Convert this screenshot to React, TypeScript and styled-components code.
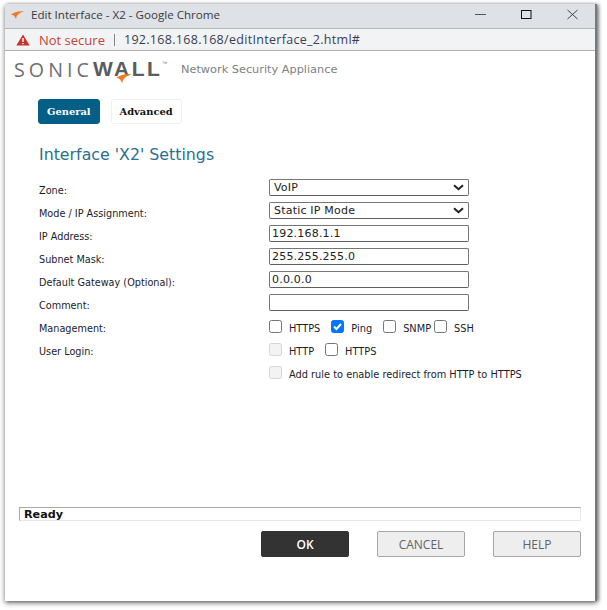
import { createGlobalStyle } from "styled-components";
import styled from "styled-components";

const GlobalStyle = createGlobalStyle`
  html, body {
    margin: 0;
    padding: 0;
    background: #ffffff;
  }
  body {
    font-family: "DejaVu Sans", Verdana, sans-serif;
  }
`;

const Page = styled.div`
  width: 607px;
  height: 610px;
  box-sizing: border-box;
  padding: 4px 10px 9px 5px;
  background: #ffffff;
`;

const Window = styled.div`
  height: 100%;
  box-sizing: border-box;
  display: flex;
  flex-direction: column;
  background: #ffffff;
  border-right: 2px solid #777a7d;
  box-shadow: 0 2px 5px rgba(0, 0, 0, 0.55), 2px 0 3px rgba(0, 0, 0, 0.3);
`;

const TitleBar = styled.div`
  height: 25px;
  flex: none;
  box-sizing: border-box;
  display: flex;
  align-items: center;
  padding: 0 0 3px 5px;
  background: #dee1e6;
  border-bottom: 1px solid #b4b6b9;
`;

const WindowTitle = styled.span`
  margin-left: 6px;
  font-family: "Open Sans", "Liberation Sans", sans-serif;
  font-size: 11.6px;
  color: #3a3b3d;
  flex: 1;
`;

const WindowButton = styled.div`
  width: 46px;
  height: 21px;
  display: flex;
  align-items: center;
  justify-content: center;
`;

const AddressBar = styled.div`
  height: 22px;
  flex: none;
  box-sizing: border-box;
  display: flex;
  align-items: center;
  padding-left: 11px;
  background: #f1f3f4;
  border-bottom: 1px solid #aeb0b2;
`;

const NotSecure = styled.span`
  margin-left: 9px;
  font-family: "Open Sans", "Liberation Sans", sans-serif;
  font-size: 13px;
  color: #c5443a;
`;

const Divider = styled.span`
  width: 1px;
  height: 12px;
  margin: 0 9px;
  background: #80868b;
`;

const Url = styled.span`
  font-family: "Open Sans", "Liberation Sans", sans-serif;
  font-size: 12.5px;
  letter-spacing: 0.3px;
  color: #3a3d55;
`;

const Brand = styled.div`
  height: 33px;
  flex: none;
  display: flex;
  align-items: center;
  padding: 3px 0 0 9px;
  box-sizing: border-box;
`;

const LogoWrap = styled.div`
  position: relative;
  width: 154px;
  display: flex;
  align-items: center;
  height: 22px;
`;

const LogoLight = styled.span`
  font-family: "Open Sans", "Liberation Sans", sans-serif;
  font-size: 19.6px;
  font-weight: 400;
  letter-spacing: 4.1px;
  color: #6c6f72;
`;

const LogoBold = styled.span`
  font-family: "Liberation Sans", sans-serif;
  font-size: 21px;
  font-weight: 700;
  letter-spacing: 2.4px;
  color: #5a5c5f;
`;

const LogoMark = styled.span`
  font-family: "Liberation Sans", sans-serif;
  font-size: 5px;
  color: #6c6f72;
  align-self: flex-start;
  margin-top: 2px;
`;

const LogoSwoosh = styled.svg`
  position: absolute;
  left: 100px;
  top: 15px;
`;

const Product = styled.span`
  margin-left: 13px;
  padding-top: 1px;
  font-family: "DejaVu Sans", sans-serif;
  font-size: 11.3px;
  color: #7c7f83;
`;

const Tabs = styled.div`
  display: flex;
  gap: 11px;
  padding: 15px 0 0 33px;
`;

const Tab = styled.div<{ $active?: boolean }>`
  height: 25px;
  box-sizing: border-box;
  padding: 0 8px;
  display: flex;
  align-items: center;
  font-family: "DejaVu Serif", "Liberation Serif", serif;
  font-size: 9.9px;
  font-weight: 700;
  border-radius: 3px;
  color: ${(p) => (p.$active ? "#ffffff" : "#111111")};
  background: ${(p) => (p.$active ? "#045f86" : "#ffffff")};
  border: 1px solid ${(p) => (p.$active ? "#045f86" : "#f0f0f0")};
`;

const Heading = styled.h1`
  margin: 22px 0 0 34px;
  font-family: "DejaVu Sans", sans-serif;
  font-size: 15.8px;
  line-height: 18px;
  font-weight: 400;
  color: #2b6f8e;
`;

const Form = styled.div`
  margin: 15px 0 0 34px;
  display: grid;
  grid-template-columns: 230px 200px;
  grid-auto-rows: 17px;
  row-gap: 6px;
  align-items: center;
`;

const Label = styled.div`
  font-size: 9.7px;
  color: #1c1c2a;
  padding-top: 5px;
`;

const Field = styled.div`
  height: 17px;
  box-sizing: border-box;
  display: flex;
  align-items: center;
  justify-content: space-between;
  padding: 0 2px;
  background: #ffffff;
  border: 1px solid #767676;
  border-bottom-color: #5f5f5f;
  border-radius: 2px;
  font-size: 11px;
  letter-spacing: 0.2px;
  color: #222222;
`;

const SelectField = styled(Field)`
  padding: 0 4px;
`;

const Options = styled.div`
  display: flex;
  align-items: center;
  white-space: nowrap;
  width: 300px;
`;

const Box = styled.span<{ $checked?: boolean; $disabled?: boolean }>`
  flex: none;
  width: 13px;
  height: 13px;
  box-sizing: border-box;
  border-radius: 2.5px;
  display: flex;
  align-items: center;
  justify-content: center;
  margin-top: 2px;
  background: ${(p) => (p.$checked ? "#0075ff" : p.$disabled ? "#f3f3f3" : "#ffffff")};
  border: 1px solid
    ${(p) => (p.$checked ? "#0075ff" : p.$disabled ? "#d6d6d6" : "#767676")};
`;

const OptionText = styled.span<{ $gap: number }>`
  margin-left: 7px;
  margin-right: ${(p) => p.$gap}px;
  padding-top: 6px;
  font-size: 9.8px;
  color: #1c1c2a;
`;

const Spacer = styled.div`
  flex: 1;
`;

const Status = styled.div`
  height: 14px;
  margin: 0 14px 0 14px;
  box-sizing: border-box;
  padding-left: 4px;
  display: flex;
  align-items: center;
  border-top: 1px solid #a9a9a9;
  border-left: 1px solid #a9a9a9;
  border-right: 1px solid #e6e6e6;
  border-bottom: 1px solid #e6e6e6;
  font-size: 11.2px;
  font-weight: 700;
  color: #111111;
`;

const Buttons = styled.div`
  display: flex;
  justify-content: flex-end;
  gap: 28px;
  margin: 10px 14px 44px 0;
`;

const Button = styled.div<{ $primary?: boolean }>`
  width: 88px;
  height: 26px;
  box-sizing: border-box;
  display: flex;
  align-items: center;
  justify-content: center;
  border-radius: 2px;
  font-family: "Open Sans", "Liberation Sans", sans-serif;
  font-size: 12px;
  font-weight: ${(p) => (p.$primary ? 600 : 400)};
  color: ${(p) => (p.$primary ? "#ffffff" : "#5f6468")};
  background: ${(p) => (p.$primary ? "#333333" : "#eeeeee")};
  border: 1px solid ${(p) => (p.$primary ? "#333333" : "#a6a6a6")};
`;

const Chevron = () => (
  <svg width="11" height="7" viewBox="0 0 11 7">
    <path d="M1 1.2 L5.5 5.2 L10 1.2" fill="none" stroke="#222" strokeWidth="2" />
  </svg>
);

const Swoosh = ({ width, height }: { width: number; height: number }) => (
  <svg width={width} height={height} viewBox="0 0 16 10">
    <path
      d="M15 1 C9 0.5 3.5 2 0.5 5 C3 4.5 4.5 5 6.5 9.5 C6.5 6 9 3 15 1 Z"
      fill="#ee7b22"
    />
  </svg>
);

export default function App() {
  return (
    <>
      <GlobalStyle />
      <Page>
        <Window>
          <TitleBar>
            <Swoosh width={15} height={10} />
            <WindowTitle>Edit Interface - X2 - Google Chrome</WindowTitle>
            <WindowButton>
              <svg width="11" height="11" viewBox="0 0 11 11">
                <path d="M0 5.5 H11" stroke="#555" strokeWidth="1" />
              </svg>
            </WindowButton>
            <WindowButton>
              <svg width="11" height="11" viewBox="0 0 11 11">
                <rect x="0.5" y="1.5" width="9.5" height="8" fill="none" stroke="#111" strokeWidth="1" />
              </svg>
            </WindowButton>
            <WindowButton>
              <svg width="11" height="11" viewBox="0 0 11 11">
                <path d="M0.5 1 L10.5 10 M10.5 1 L0.5 10" stroke="#333" strokeWidth="0.9" />
              </svg>
            </WindowButton>
          </TitleBar>
          <AddressBar>
            <svg width="14" height="12" viewBox="0 0 14 12">
              <path d="M7 0.5 L13.7 11.5 H0.3 Z" fill="#c5332a" />
              <path d="M6.3 4 H7.7 V8 H6.3 Z M6.3 8.9 H7.7 V10.3 H6.3 Z" fill="#fff" />
            </svg>
            <NotSecure>Not secure</NotSecure>
            <Divider />
            <Url>192.168.168.168/editInterface_2.html#</Url>
          </AddressBar>
          <Brand>
            <LogoWrap>
              <LogoLight>SONIC</LogoLight>
              <LogoBold>WALL</LogoBold>
              <LogoMark>™</LogoMark>
              <LogoSwoosh width="20" height="11" viewBox="0 0 16 10">
                <path
                  d="M15 1 C9 0.5 3.5 2 0.5 5 C3 4.5 4.5 5 6.5 9.5 C6.5 6 9 3 15 1 Z"
                  fill="#ee7b22"
                />
              </LogoSwoosh>
            </LogoWrap>
            <Product>Network Security Appliance</Product>
          </Brand>
          <Tabs>
            <Tab $active>General</Tab>
            <Tab>Advanced</Tab>
          </Tabs>
          <Heading>Interface 'X2' Settings</Heading>
          <Form>
            <Label>Zone:</Label>
            <SelectField>
              VoIP
              <Chevron />
            </SelectField>
            <Label>Mode / IP Assignment:</Label>
            <SelectField>
              Static IP Mode
              <Chevron />
            </SelectField>
            <Label>IP Address:</Label>
            <Field>192.168.1.1</Field>
            <Label>Subnet Mask:</Label>
            <Field>255.255.255.0</Field>
            <Label>Default Gateway (Optional):</Label>
            <Field>0.0.0.0</Field>
            <Label>Comment:</Label>
            <Field />
            <Label>Management:</Label>
            <Options>
              <Box />
              <OptionText $gap={11}>HTTPS</OptionText>
              <Box $checked>
                <svg width="11" height="11" viewBox="0 0 11 11">
                  <path d="M2 5.5 L4.5 8 L9 3" fill="none" stroke="#fff" strokeWidth="2" />
                </svg>
              </Box>
              <OptionText $gap={11}>Ping</OptionText>
              <Box />
              <OptionText $gap={3}>SNMP</OptionText>
              <Box />
              <OptionText $gap={0}>SSH</OptionText>
            </Options>
            <Label>User Login:</Label>
            <Options>
              <Box $disabled />
              <OptionText $gap={11}>HTTP</OptionText>
              <Box />
              <OptionText $gap={0}>HTTPS</OptionText>
            </Options>
            <div />
            <Options>
              <Box $disabled />
              <OptionText $gap={0}>Add rule to enable redirect from HTTP to HTTPS</OptionText>
            </Options>
          </Form>
          <Spacer />
          <Status>Ready</Status>
          <Buttons>
            <Button $primary>OK</Button>
            <Button>CANCEL</Button>
            <Button>HELP</Button>
          </Buttons>
        </Window>
      </Page>
    </>
  );
}
